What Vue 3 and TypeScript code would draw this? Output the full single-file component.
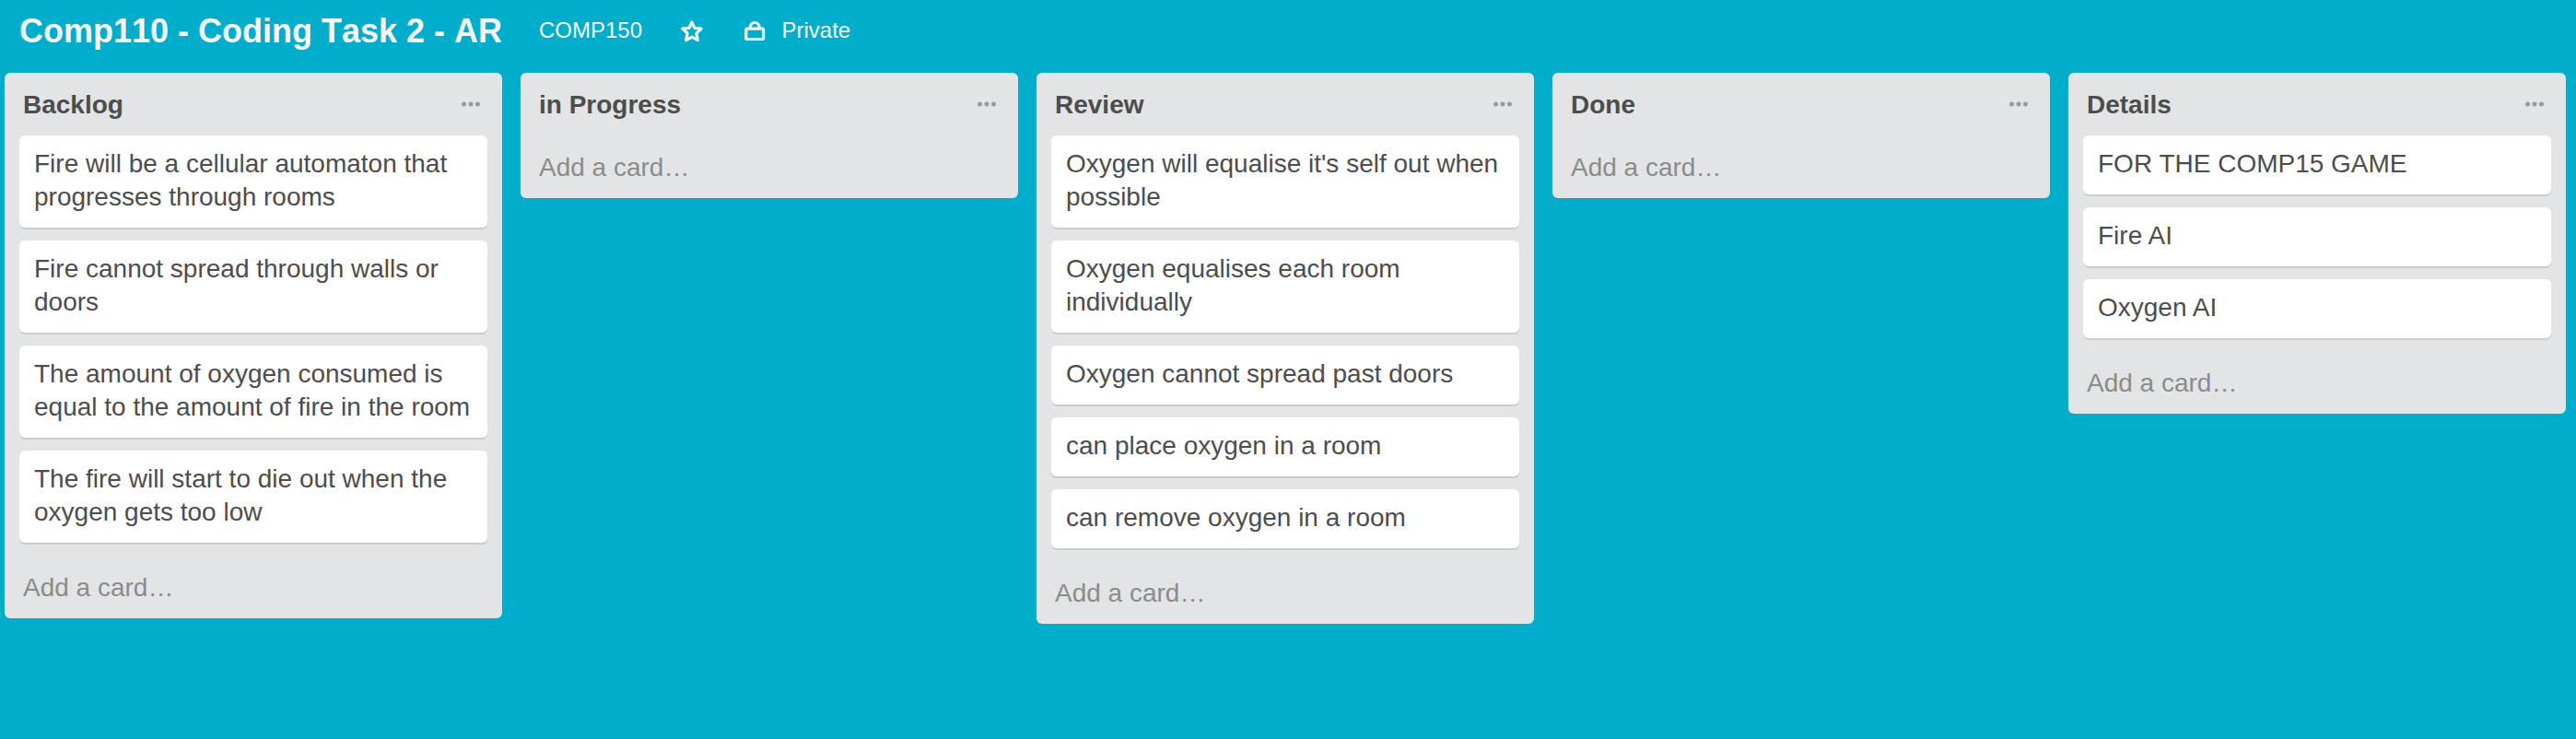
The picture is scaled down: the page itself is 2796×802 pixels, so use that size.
<script setup lang="ts">
interface List {
  name: string
  cards: string[]
}

const lists: List[] = [
  {
    name: 'Backlog',
    cards: [
      'Fire will be a cellular automaton that progresses through rooms',
      'Fire cannot spread through walls or doors',
      'The amount of oxygen consumed is equal to the amount of fire in the room',
      'The fire will start to die out when the oxygen gets too low',
    ],
  },
  { name: 'in Progress', cards: [] },
  {
    name: 'Review',
    cards: [
      "Oxygen will equalise it's self out when possible",
      'Oxygen equalises each room individually',
      'Oxygen cannot spread past doors',
      'can place oxygen in a room',
      'can remove oxygen in a room',
    ],
  },
  { name: 'Done', cards: [] },
  { name: 'Details', cards: ['FOR THE COMP15 GAME', 'Fire AI', 'Oxygen AI'] },
]
</script>

<template>
  <div class="board">
    <header class="board-header">
      <h1 class="board-title">Comp110 - Coding Task 2 - AR</h1>
      <span class="team">COMP150</span>
      <svg class="star" viewBox="0 0 26 26" width="26" height="26">
        <path d="M13 3.2 L15.9 9.3 L23.2 10.2 L17.9 15.1 L19.3 22.7 L13 19.2 L6.7 22.7 L8.1 15.1 L2.8 10.2 L10.1 9.3 Z" />
      </svg>
      <svg class="lock" viewBox="0 0 24 24" width="24" height="24">
        <rect x="2.8" y="10.2" width="18.8" height="11.3" rx="1" />
        <path d="M7.4 10.2 V8.3 A4.8 4.8 0 0 1 17 8.3 V10.2" />
      </svg>
      <span class="visibility">Private</span>
    </header>
    <main class="lists">
      <section v-for="list in lists" :key="list.name" class="list">
        <div class="list-header">
          <h2 class="list-name">{{ list.name }}</h2>
          <svg class="menu" viewBox="0 0 20 6" width="20" height="6">
            <circle cx="2.5" cy="3" r="2.5" />
            <circle cx="10" cy="3" r="2.5" />
            <circle cx="17.5" cy="3" r="2.5" />
          </svg>
        </div>
        <article v-for="card in list.cards" :key="card" class="card">{{ card }}</article>
        <a class="add-card">Add a card…</a>
      </section>
    </main>
  </div>
</template>

<style>
body {
  margin: 0;
  background: #00aecc;
}
</style>

<style scoped>
.board {
  box-sizing: border-box;
  width: 100%;
  height: 802px;
  overflow: hidden;
  background: #00aecc;
  color: #4d4d4d;
  font-family: "Liberation Sans", Arial, sans-serif;
  font-size: 28px;
  line-height: 36px;
}
.board-header {
  display: flex;
  align-items: center;
  box-sizing: border-box;
  height: 79px;
  padding: 0 0 13px 21px;
  color: #f6f6f6;
  font-size: 24px;
  white-space: nowrap;
}
.board-title {
  margin: 0;
  padding-top: 2px;
  width: 524px;
  font-size: 36px;
  line-height: 40px;
  font-kerning: none;
}
.team {
  width: 153px;
  margin-left: 40px;
}
.star,
.lock {
  flex: none;
  fill: none;
  stroke: #f6f6f6;
  stroke-width: 3.2;
  stroke-linejoin: round;
}
.star {
  margin-top: 1px;
}
.lock {
  margin-left: 43px;
}
.visibility {
  margin-left: 17.5px;
}
.lists {
  display: flex;
  align-items: flex-start;
  gap: 20px;
  padding-left: 5px;
}
.list {
  flex: none;
  box-sizing: border-box;
  width: 540px;
  padding: 0 16px;
  border-radius: 6px;
  background: #e2e4e6;
}
.list-header {
  display: flex;
  justify-content: space-between;
  align-items: center;
  box-sizing: border-box;
  height: 68px;
  padding: 0 8px 0 4px;
}
.list-name {
  margin: 0;
  padding-top: 2px;
  font-size: 28px;
  line-height: 36px;
}
.menu {
  fill: #999;
}
.card {
  margin-bottom: 14px;
  padding: 13px 16px 15px;
  border-radius: 6px;
  background: #fff;
  box-shadow: 0 2px 0 #ccc;
}
.add-card {
  display: block;
  padding: 17px 4px 15px;
  color: #8c8c8c;
}
</style>
